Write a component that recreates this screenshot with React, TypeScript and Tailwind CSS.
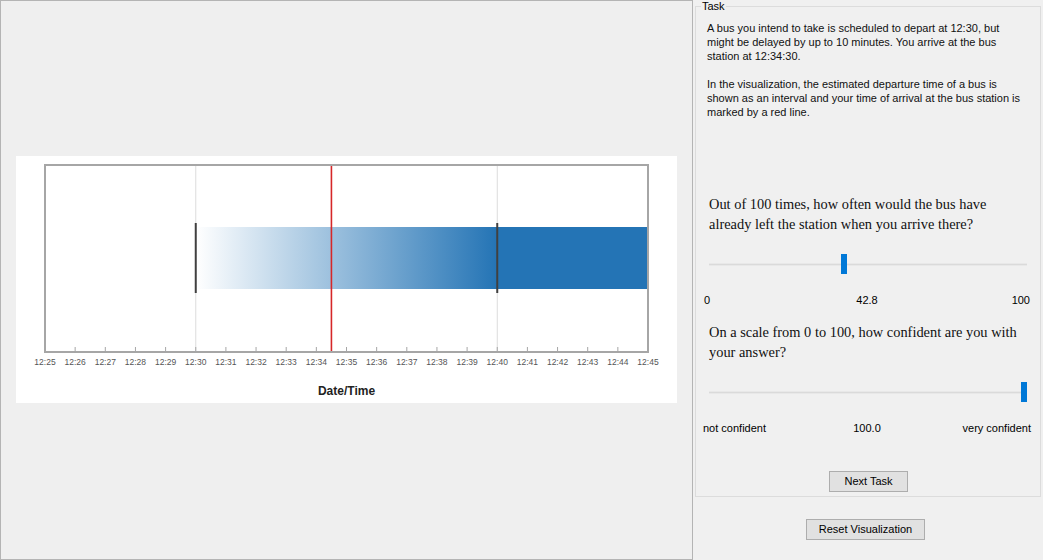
import React from 'react';

const ticks = Array.from({ length: 21 }, (_, i) => i);
const x0 = 29;
const step = 603 / 20;
const tx = (m: number) => x0 + m * step;

function Chart() {
  return (
    <div className="ml-[15px] mt-[155px] w-[661px] h-[247px] bg-white">
      <svg width="661" height="247" viewBox="0 0 661 247">
        <defs>
          <linearGradient id="fade" x1="0" x2="1" y1="0" y2="0">
            <stop offset="0" stopColor="#2474b5" stopOpacity="0" />
            <stop offset="1" stopColor="#2474b5" stopOpacity="1" />
          </linearGradient>
        </defs>
        <line x1={tx(5)} x2={tx(5)} y1="9" y2="196" stroke="#dcdcdc" strokeWidth="1" />
        <line x1={tx(15)} x2={tx(15)} y1="9" y2="196" stroke="#dcdcdc" strokeWidth="1" />
        <rect x={tx(5)} y="71" width={tx(15) - tx(5)} height="62" fill="url(#fade)" />
        <rect x={tx(15)} y="71" width={631 - tx(15)} height="62" fill="#2474b5" />
        <line x1={tx(5)} x2={tx(5)} y1="67" y2="137" stroke="#404040" strokeWidth="2" />
        <line x1={tx(15)} x2={tx(15)} y1="67" y2="137" stroke="#404040" strokeWidth="2" />
        <line x1={tx(9.5)} x2={tx(9.5)} y1="9" y2="196" stroke="#d62728" strokeWidth="1.6" />
        <rect x="29" y="9" width="603" height="187" fill="none" stroke="#a6a6a6" strokeWidth="2" />
        {ticks.map((m) => (
          <g key={m}>
            <line x1={tx(m)} x2={tx(m)} y1="191" y2="197" stroke="#a6a6a6" strokeWidth="1" />
            <text
              x={tx(m)}
              y="209"
              textAnchor="middle"
              fontSize="8.5"
              fill="#555"
              fontFamily="'Liberation Sans', Arial, sans-serif"
            >
              {`12:${String(25 + m).padStart(2, '0')}`}
            </text>
          </g>
        ))}
        <text
          x="330.5"
          y="239"
          textAnchor="middle"
          fontSize="12"
          fontWeight="bold"
          fill="#222"
          fontFamily="'Liberation Sans', Arial, sans-serif"
        >
          Date/Time
        </text>
      </svg>
    </div>
  );
}

function Slider({ value }: { value: number }) {
  return (
    <div className="relative ml-[13px] w-[318px] h-[20px]">
      <div className="absolute left-0 right-0 top-[9px] h-[3px] bg-[#dadada] border-y border-[#e8e8e8]" />
      <div
        className="absolute top-0 w-[6px] h-[20px] bg-[#0078d7]"
        style={{ left: `${(value / 100) * 314 + 1 - 3}px` }}
      />
    </div>
  );
}

export default function App() {
  const sans = "font-['Segoe_UI','Liberation_Sans',Arial,sans-serif]";
  return (
    <div className={`flex w-[1043px] h-[560px] bg-[#f0f0f0] text-[11px] text-black ${sans}`}>
      <div className="w-[693px] h-full flex items-start bg-[#efefef] border border-[#b4b4b4]">
        <Chart />
      </div>

      <div className="flex-1 flex flex-col">
        <div className="relative mt-[6px] mx-[2px] h-[491px] border border-[#dcdcdc] flex flex-col">
          <span className="absolute -top-[8px] left-[5px] px-[1px] bg-[#f0f0f0] leading-[14px] text-[#000]">
            Task
          </span>
          <div className="pt-[14px] pl-[11px] leading-[14px] text-[#111]">
            <div>A bus you intend to take is scheduled to depart at 12:30, but</div>
            <div>might be delayed by up to 10 minutes. You arrive at the bus</div>
            <div>station at 12:34:30.</div>
            <div>&nbsp;</div>
            <div>In the visualization, the estimated departure time of a bus is</div>
            <div>shown as an interval and your time of arrival at the bus station is</div>
            <div>marked by a red line.</div>
          </div>

          <div className="mt-[75px] pl-[13px] text-[14.4px] leading-[20px] font-['Liberation_Serif','Times_New_Roman',serif] text-[#111]">
            <div>Out of 100 times, how often would the bus have</div>
            <div>already left the station when you arrive there?</div>
          </div>
          <div className="mt-[20px]">
            <Slider value={42.8} />
          </div>
          <div className="mt-[19px] ml-[8px] w-[326px] grid grid-cols-3 leading-[14px]">
            <span className="text-left">0</span>
            <span className="text-center">42.8</span>
            <span className="text-right">100</span>
          </div>

          <div className="mt-[15px] pl-[13px] text-[14.4px] leading-[20px] font-['Liberation_Serif','Times_New_Roman',serif] text-[#111]">
            <div>On a scale from 0 to 100, how confident are you with</div>
            <div>your answer?</div>
          </div>
          <div className="mt-[20px]">
            <Slider value={100} />
          </div>
          <div className="mt-[19px] ml-[7px] w-[328px] grid grid-cols-3 leading-[14px]">
            <span className="text-left whitespace-nowrap">not confident</span>
            <span className="text-center">100.0</span>
            <span className="text-right whitespace-nowrap">very confident</span>
          </div>

          <div className="mt-[36px] flex justify-center">
            <button className="ml-[1px] w-[79px] h-[21px] bg-[#e1e1e1] border border-[#adadad] leading-[19px]">
              Next Task
            </button>
          </div>
        </div>

        <div className="mt-[22px] ml-[113px]">
          <button className="w-[119px] h-[21px] bg-[#e1e1e1] border border-[#adadad] leading-[19px]">
            Reset Visualization
          </button>
        </div>
      </div>
    </div>
  );
}
